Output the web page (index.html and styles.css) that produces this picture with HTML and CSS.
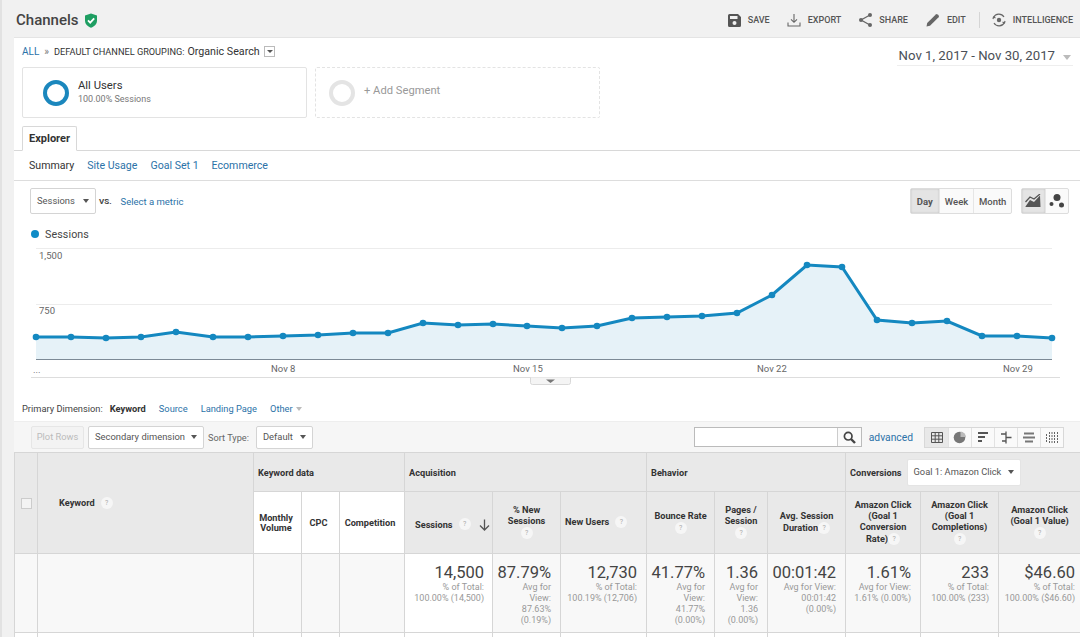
FILE: index.html
```html
<!DOCTYPE html>
<html lang="en">
<head>
<meta charset="utf-8">
<title>Channels</title>
<link rel="stylesheet" href="styles.css">
</head>
<body>
<header class="topbar">
  <div class="title"><h1>Channels</h1>
    <svg class="shield" width="14" height="15" viewBox="0 0 14 15"><path d="M7 0.5 13 2.6V7.5C13 11 10.5 13.5 7 14.7 3.5 13.5 1 11 1 7.5V2.6Z" fill="#1e9e62"/><path d="M4 7.4 6.2 9.6 10.2 5.4" fill="none" stroke="#fff" stroke-width="1.8"/></svg>
  </div>
  <nav class="actions">
    <a class="action save"><svg width="13" height="13" viewBox="0 0 13 13"><path d="M1.5 0H10L13 3V11.5A1.5 1.5 0 0 1 11.500 13H1.500A1.500 1.500 0 0 1 0 11.500V1.500A1.500 1.500 0 0 1 1.500 0Z" fill="#555"/><rect x="2" y="2" width="7.500" height="3" fill="#f1f1f1"/><circle cx="6.500" cy="9" r="2" fill="#f1f1f1"/></svg>SAVE</a>
    <a class="action export"><svg width="14" height="14" viewBox="0 0 14 14" fill="none" stroke="#666" stroke-width="1.100"><path d="M7 1V9M4 6.300 7 9.300 10 6.300M1 9.500V13H13V9.500"/></svg>EXPORT</a>
    <a class="action share"><svg width="13" height="14" viewBox="0 0 13 14"><path d="M11 2 2 7 11 12" fill="none" stroke="#666" stroke-width="1.300"/><circle cx="11" cy="2" r="2" fill="#666"/><circle cx="2" cy="7" r="2" fill="#666"/><circle cx="11" cy="12" r="2" fill="#666"/></svg>SHARE</a>
    <a class="action edit"><svg width="14" height="14" viewBox="0 0 14 14"><path d="M0.500 13.500 1.200 10 9.800 1.400A1.300 1.300 0 0 1 11.600 1.400L12.600 2.400A1.300 1.300 0 0 1 12.600 4.200L4 12.800Z" fill="#666"/></svg>EDIT</a>
    <span class="divider"></span>
    <a class="action intel"><svg width="14" height="14" viewBox="0 0 14 14" fill="none" stroke="#666" stroke-width="1.200"><path d="M1.500 4.500A6 6 0 0 1 12 4M12.500 9.500A6 6 0 0 1 2 10"/><path d="M1 6 1.500 4 3.500 5M13 8 12.500 10 10.500 9"/><circle cx="7" cy="7" r="2.200" fill="#666" stroke="none"/></svg>INTELLIGENCE</a>
  </nav>
</header>

<main class="content">
  <section class="top">
    <div class="top-left">
      <div class="crumbs"><a class="link all">ALL</a><span class="raquo">»</span><span class="group">DEFAULT CHANNEL GROUPING:</span><span class="crumb-value">Organic Search</span><span class="mini-select"></span></div>
      <div class="segments">
        <div class="segment">
          <span class="ring ring-on"></span>
          <div><div class="seg-name">All Users</div><div class="seg-sub">100.00% Sessions</div></div>
        </div>
        <div class="segment segment-add">
          <span class="ring ring-off"></span>
          <div class="seg-add-text">+ Add Segment</div>
        </div>
      </div>
    </div>
    <div class="date">Nov 1, 2017 - Nov 30, 2017<span class="caret caret-date"></span></div>
  </section>

  <div class="tabs"><span class="tab">Explorer</span></div>
  <nav class="subnav"><span>Summary</span><a class="link">Site Usage</a><a class="link">Goal Set 1</a><a class="link">Ecommerce</a></nav>

  <div class="metric-row">
    <span class="select metric-select">Sessions<span class="caret"></span></span>
    <b class="vs">VS.</b>
    <a class="link metric-link">Select a metric</a>
    <span class="spacer"></span>
    <div class="btn-group periods"><span class="active">Day</span><span>Week</span><span>Month</span></div>
    <div class="btn-group modes">
      <span class="active"><svg width="16" height="14" viewBox="0 0 16 14"><path d="M0.500 12.500 5 6 9 8 15 1.500 15.500 13H0.500Z" fill="#555"/><path d="M0.500 8 5 3 9 5 15 0" fill="none" stroke="#555" stroke-width="1.300"/></svg></span>
      <span><svg width="16" height="14" viewBox="0 0 16 14"><circle cx="8" cy="3.500" r="3.500" fill="#444"/><circle cx="2.500" cy="10" r="2" fill="#444"/><circle cx="12.500" cy="11" r="2.500" fill="#444"/></svg></span>
    </div>
  </div>

  <div class="legend"><span class="dot"></span>Sessions</div>

  <svg class="chart" width="1066" height="141" viewBox="14 244 1066 141">
    <line class="grid" x1="36" y1="248.500" x2="1052" y2="248.500"/>
    <line class="grid" x1="36" y1="304.500" x2="1052" y2="304.500"/>
    <polygon class="area" points="36,360 36,337 71,337 106,338 141,337 176,332 213,337 248,337 283,336 318,335 353,333 388,333 423,323 458,325 493,324 527,326 562,328 597,326 632,318 667,317 702,316 737,313 772,295 807,265 842,267 877,320 912,323 947,321 982,336 1017,336 1052,338 1052,360"/>
    <line class="axis" x1="36" y1="359.500" x2="1052" y2="359.500"/>
    <line class="axis-low" x1="31" y1="377.500" x2="1060" y2="377.500"/>
    <polyline class="line" points="36,337 71,337 106,338 141,337 176,332 213,337 248,337 283,336 318,335 353,333 388,333 423,323 458,325 493,324 527,326 562,328 597,326 632,318 667,317 702,316 737,313 772,295 807,265 842,267 877,320 912,323 947,321 982,336 1017,336 1052,338"/>
    <g class="points">
      <circle cx="36" cy="337" r="3.300"/><circle cx="71" cy="337" r="3.300"/><circle cx="106" cy="338" r="3.300"/><circle cx="141" cy="337" r="3.300"/><circle cx="176" cy="332" r="3.300"/><circle cx="213" cy="337" r="3.300"/><circle cx="248" cy="337" r="3.300"/><circle cx="283" cy="336" r="3.300"/><circle cx="318" cy="335" r="3.300"/><circle cx="353" cy="333" r="3.300"/><circle cx="388" cy="333" r="3.300"/><circle cx="423" cy="323" r="3.300"/><circle cx="458" cy="325" r="3.300"/><circle cx="493" cy="324" r="3.300"/><circle cx="527" cy="326" r="3.300"/><circle cx="562" cy="328" r="3.300"/><circle cx="597" cy="326" r="3.300"/><circle cx="632" cy="318" r="3.300"/><circle cx="667" cy="317" r="3.300"/><circle cx="702" cy="316" r="3.300"/><circle cx="737" cy="313" r="3.300"/><circle cx="772" cy="295" r="3.300"/><circle cx="807" cy="265" r="3.300"/><circle cx="842" cy="267" r="3.300"/><circle cx="877" cy="320" r="3.300"/><circle cx="912" cy="323" r="3.300"/><circle cx="947" cy="321" r="3.300"/><circle cx="982" cy="336" r="3.300"/><circle cx="1017" cy="336" r="3.300"/><circle cx="1052" cy="338" r="3.300"/>
    </g>
    <text class="tick" x="39" y="259">1,500</text>
    <text class="tick" x="39" y="314">750</text>
    <text class="tick" x="33" y="373">...</text>
    <text class="tick" x="271" y="372">Nov 8</text>
    <text class="tick" x="513" y="372">Nov 15</text>
    <text class="tick" x="757" y="372">Nov 22</text>
    <text class="tick" x="1003" y="372">Nov 29</text>
    <path class="handle" d="M530.500 377.500V382.500A2 2 0 0 0 532.500 384.500H568.500A2 2 0 0 0 570.500 382.500V377.500"/>
    <path d="M546 379.500H555L550.500 383Z" fill="#777"/>
  </svg>

  <div class="dimensions"><span class="dim-label">Primary Dimension:</span><b class="dim-active">Keyword</b><a class="link dim-link">Source</a><a class="link dim-link">Landing Page</a><a class="link dim-link">Other<span class="caret caret-other"></span></a></div>

  <div class="toolbar">
    <span class="select plot">Plot Rows</span>
    <span class="select secondary">Secondary dimension<span class="caret"></span></span>
    <span class="sort-label">Sort Type:</span>
    <span class="select sort">Default<span class="caret"></span></span>
    <span class="spacer"></span>
    <div class="search"><span class="search-input"></span><span class="search-btn"><svg width="13" height="13" viewBox="0 0 13 13" fill="none" stroke="#444"><circle cx="5.200" cy="5.200" r="3.800" stroke-width="1.700"/><path d="M8 8 12 12" stroke-width="2.400"/></svg></span></div>
    <a class="link advanced">advanced</a>
    <div class="views">
      <span class="active"><svg width="14" height="13" viewBox="0 0 14 13" fill="none" stroke="#555"><path d="M1.500 1.500H12.500V11.500H1.500ZM1.500 4.800H12.500M1.500 8.200H12.500M5.200 1.500V11.500M8.800 1.500V11.500"/></svg></span>
      <span><svg width="14" height="13" viewBox="0 0 14 13"><circle cx="6.500" cy="6.500" r="5.800" fill="#777"/><path d="M7.500 0.500A5.800 5.800 0 0 1 13 6H7.500Z" fill="#bbb"/></svg></span>
      <span><svg width="14" height="13" viewBox="0 0 14 13" fill="#555"><rect x="2" y="1" width="10" height="2"/><rect x="2" y="5" width="7" height="2"/><rect x="2" y="9" width="4" height="2"/></svg></span>
      <span><svg width="14" height="13" viewBox="0 0 14 13" fill="none" stroke="#555" stroke-width="1.300"><path d="M2 3H7M7 0.500V6.500H12.500M7 6.500V12.500M3 10H7"/></svg></span>
      <span><svg width="14" height="13" viewBox="0 0 14 13" fill="#777"><rect x="2" y="1.500" width="10" height="2"/><rect x="1" y="5.500" width="12" height="2"/><rect x="3" y="9.500" width="8" height="2"/></svg></span>
      <span><svg width="14" height="13" viewBox="0 0 14 13" fill="none" stroke="#666"><path d="M1.500 3V12M4.500 1V12M7 1V12M9.500 1V12M12.500 1V12" stroke-dasharray="2 1"/></svg></span>
    </div>
  </div>

  <table class="report">
    <colgroup>
      <col class="c-check"><col class="c-key"><col class="c-vol"><col class="c-cpc"><col class="c-comp"><col class="c-sess"><col class="c-new"><col class="c-users"><col class="c-bounce"><col class="c-pages"><col class="c-avg"><col class="c-rate"><col class="c-done"><col class="c-value">
    </colgroup>
    <thead>
      <tr class="row-group">
        <th rowspan="2" class="check-cell"><span class="checkbox"></span></th>
        <th rowspan="2" class="key-head"><span class="key-inner">Keyword<i class="q">?</i></span></th>
        <th colspan="3" class="left">Keyword data</th>
        <th colspan="3" class="left">Acquisition</th>
        <th colspan="3" class="left">Behavior</th>
        <th colspan="3" class="left conv"><span class="conv-wrap">Conversions<span class="select goal">Goal 1: Amazon Click<span class="caret"></span></span></span></th>
      </tr>
      <tr class="row-head">
        <th class="white tight">Monthly<br>Volume</th>
        <th class="white">CPC</th>
        <th class="white">Competition</th>
        <th class="sess-head"><span class="sess-inner">Sessions<i class="q">?</i><svg class="arrow" width="11" height="12" viewBox="0 0 11 12" fill="none" stroke="#555" stroke-width="1.300"><path d="M5.500 0.500V11M1 6.500 5.500 11 10 6.500"/></svg></span></th>
        <th>% New<br>Sessions<br><i class="q">?</i></th>
        <th class="users-head">New Users<i class="q">?</i></th>
        <th>Bounce Rate<br><i class="q">?</i></th>
        <th>Pages /<br>Session<br><i class="q">?</i></th>
        <th>Avg. Session<br>Duration<i class="q">?</i></th>
        <th>Amazon Click<br>(Goal 1<br>Conversion<br>Rate)<i class="q">?</i></th>
        <th>Amazon Click<br>(Goal 1<br>Completions)<br><i class="q">?</i></th>
        <th>Amazon Click<br>(Goal 1 Value)<br><i class="q">?</i></th>
      </tr>
    </thead>
    <tbody>
      <tr class="totals">
        <td></td><td></td><td></td><td></td><td></td>
        <td class="sorted"><strong>14,500</strong><small>% of Total:<br>100.00% (14,500)</small></td>
        <td><strong>87.79%</strong><small>Avg for<br>View:<br>87.63%<br>(0.19%)</small></td>
        <td><strong>12,730</strong><small>% of Total:<br>100.19% (12,706)</small></td>
        <td><strong>41.77%</strong><small>Avg for<br>View:<br>41.77%<br>(0.00%)</small></td>
        <td><strong>1.36</strong><small>Avg for<br>View:<br>1.36<br>(0.00%)</small></td>
        <td><strong>00:01:42</strong><small>Avg for View:<br>00:01:42<br>(0.00%)</small></td>
        <td><strong>1.61%</strong><small>Avg for View:<br>1.61% (0.00%)</small></td>
        <td><strong>233</strong><small>% of Total:<br>100.00% (233)</small></td>
        <td class="last"><strong>$46.60</strong><small>% of Total:<br>100.00% ($46.60)</small></td>
      </tr>
      <tr class="next">
        <td></td><td></td><td></td><td></td><td></td><td class="sorted-next"></td><td></td><td></td><td></td><td></td><td></td><td></td><td></td><td></td>
      </tr>
    </tbody>
  </table>
</main>
</body>
</html>
```
FILE: styles.css
```css
* { box-sizing: border-box; }
html, body { margin: 0; height: 100%; overflow: hidden; }
body {
  width: 1080px; height: 637px;
  background: #f1f1f1;
  border-left: 2px solid #e2e2e2;
  font-family: Roboto, "Liberation Sans", sans-serif;
  color: #333;
  font-size: 11px;
}
svg { display: block; }
.link { color: #2b72a8; }
.spacer { flex: 1; }

.topbar { height: 37px; display: flex; align-items: center; padding: 3px 7px 0 14px; }
.title { display: flex; align-items: center; gap: 5px; }
.title h1 { margin: 0; font-size: 15px; font-weight: 500; color: #444; }
.actions { margin-left: auto; display: flex; align-items: center; font-size: 9px; font-weight: 500; color: #555; }
.action { display: flex; align-items: center; gap: 7px; }
.save { margin-right: 17px; }
.export { margin-right: 18px; }
.share { margin-right: 18px; }
.divider { width: 1px; height: 16px; background: #d5d5d5; margin: 0 12px 0 13px; }

.content { margin-left: 12px; width: 1066px; height: 600px; background: #fff; border-top: 1px solid #e4e4e4; }

.top { display: flex; padding: 5px 7px 0 8px; height: 88px; }
.top-left { display: flex; flex-direction: column; }
.crumbs { display: flex; align-items: center; height: 16px; font-size: 11px; color: #333; }
.all { font-size: 10px; }
.raquo { margin: 0 5px; color: #777; font-size: 10px; }
.group { font-size: 9.200px; margin-right: 3px; }
.crumb-value { font-size: 10.700px; }
.mini-select { position: relative; width: 11px; height: 11px; border: 1px solid #bbb; margin-left: 4px; }
.mini-select::after { content: ""; position: absolute; left: 2px; top: 3px; border: 3px solid transparent; border-top: 3px solid #555; }
.segments { display: flex; gap: 8px; margin-top: 8px; }
.segment { width: 285px; height: 51px; border: 1px solid #e3e3e3; border-radius: 2px; display: flex; align-items: center; padding-left: 20px; gap: 9px; }
.segment-add { border-style: dashed; padding-left: 13px; }
.ring { width: 26px; height: 26px; border-radius: 50%; border: 4px solid #1b87bd; }
.ring-off { border-color: #e4e4e4; }
.seg-name { font-size: 11.300px; color: #333; line-height: 14px; }
.seg-sub { font-size: 9px; color: #777; line-height: 13px; }
.seg-add-text { font-size: 11.200px; color: #999; margin-bottom: 4px; }
.date { margin-left: auto; align-self: flex-start; margin-top: 4px; width: 176px; height: 19px; font-size: 13.200px; color: #4a4f57; white-space: nowrap; border-bottom: 1px solid #eee; line-height: 18px; position: relative; text-align: right; padding-right: 18px; }
.caret { display: inline-block; border: 3.500px solid transparent; border-top: 4px solid #555; border-bottom: 0; margin-left: 8px; vertical-align: middle; }
.caret-date { position: absolute; right: 2px; top: 8px; border-width: 5px 4.500px 0; border-top-color: #bbb; margin: 0; }

.tabs { height: 25px; padding-left: 8px; border-bottom: 1px solid #d8d8d8; }
.tab { display: block; width: 55px; height: 25px; border: 1px solid #d8d8d8; border-bottom: 1px solid #fff; border-radius: 2px 2px 0 0; background: #fff; text-align: center; font-size: 11px; font-weight: 700; line-height: 24px; color: #333; }
.subnav { height: 30px; display: flex; align-items: center; gap: 13px; padding-left: 15px; font-size: 10.600px; border-bottom: 1px solid #ddd; }

.metric-row { display: flex; align-items: center; height: 26px; margin-top: 7px; padding-left: 16px; padding-right: 11px; }
.select { display: flex; align-items: center; justify-content: space-between; height: 100%; border: 1px solid #d4d4d4; border-radius: 2px; background: #fff; color: #555; font-size: 9.400px; line-height: 10px; padding: 0 6px 1px 6px; white-space: nowrap; }
.select .caret { margin-left: 6px; }
.metric-select { width: 66px; }
.vs { font-size: 8px; margin-left: 3px; color: #444; }
.metric-link { font-size: 9.500px; margin-left: 9px; }
.btn-group { display: flex; height: 26px; border: 1px solid #ddd; border-radius: 2px; background: #fafafa; }
.btn-group span { display: flex; align-items: center; justify-content: center; border-left: 1px solid #e6e6e6; font-size: 9.500px; font-weight: 500; color: #555; }
.btn-group span:first-child { border-left: 0; }
.btn-group .active { background: #e4e4e4; box-shadow: inset 0 0 2px #bbb; font-weight: 700; }
.periods { width: 102px; }
.periods span:nth-child(1) { width: 28px; }
.periods span:nth-child(2) { width: 35px; }
.periods span:nth-child(3) { width: 38px; }
.modes { width: 48px; margin-left: 9px; }
.modes span { width: 24px; }

.legend { display: flex; align-items: center; height: 16px; margin-top: 12px; margin-left: 17px; font-size: 10.700px; color: #444; letter-spacing: 0.100px; }
.dot { width: 8px; height: 8px; border-radius: 50%; background: #0f8bc6; margin-right: 6px; }

.chart { margin-top: 2px; }
.grid { stroke: #ececec; }
.axis { stroke: #7c8a96; }
.axis-low { stroke: #ddd; }
.area { fill: #e6f2f8; }
.line { fill: none; stroke: #1488c0; stroke-width: 3; }
.points circle { fill: #1488c0; }
.tick { font-family: Roboto, "Liberation Sans", sans-serif; font-size: 9.500px; fill: #666; }
.handle { fill: #f4f4f4; stroke: #d8d8d8; }

.dimensions { display: flex; align-items: center; height: 16px; margin-top: 15px; padding-left: 8px; font-size: 9.300px; color: #444; }
.dim-active { margin-left: 7px; font-weight: 700; color: #333; }
.dim-link { margin-left: 13px; }
.caret-other { border-top-color: #bbb; margin-left: 3px; }

.toolbar { display: flex; align-items: center; height: 31px; margin-top: 5px; padding: 0 16px 0 17px; background: #f6f6f6; border-top: 1px solid #eee; }
.toolbar > .select { height: 23px; }
.plot { width: 53px; justify-content: center; color: #bbb; background: #f3f3f3; border-color: #e6e6e6; padding: 0; font-size: 9.300px; }
.secondary { width: 116px; margin-left: 4px; }
.sort-label { margin-left: 4px; font-size: 9.200px; color: #666; }
.sort { width: 57px; margin-left: 7px; }
.search { display: flex; height: 20px; border: 1px solid #bbb; background: #fff; }
.search-input { width: 142px; }
.search-btn { width: 24px; display: flex; align-items: center; justify-content: center; border-left: 1px solid #ccc; background: #fafafa; }
.advanced { margin-left: 7px; font-size: 10.300px; }
.views { display: flex; height: 21px; margin-left: 11px; border: 1px solid #d8d8d8; background: #fafafa; }
.views span { width: 23px; display: flex; align-items: center; justify-content: center; border-left: 1px solid #e2e2e2; }
.views span:first-child { border-left: 0; }
.views .active { background: #e8e8e8; }

.report { table-layout: fixed; width: 1066px; border-collapse: collapse; }
.c-check { width: 23px; } .c-key { width: 216px; } .c-vol { width: 48px; } .c-cpc { width: 38px; } .c-comp { width: 65px; }
.c-sess { width: 88px; } .c-new { width: 68px; } .c-users { width: 86px; } .c-bounce { width: 68px; } .c-pages { width: 53px; }
.c-avg { width: 78px; } .c-rate { width: 75px; } .c-done { width: 78px; } .c-value { width: 82px; }
.report th, .report td { border: 1px solid #d6d6d6; }
.report th { background: #e9e9e9; font-size: 9.200px; font-weight: 700; color: #333; line-height: 11px; padding: 0 4px; }
.row-group { height: 39px; }
.row-group .left { text-align: left; padding-left: 4px; }
.row-head { height: 62px; }
.report .white { background: #fff; padding: 0 6px 0 2px; }
.report .tight { line-height: 10px; padding: 0 3px 0 0; }
.report .check-cell { padding: 0; }
.report .users-head { padding: 0 0 0 4px; text-align: left; }
.checkbox { display: block; width: 11px; height: 11px; margin: 0 auto; border: 1px solid #ccc; background: #f3f3f3; }
.key-inner { display: block; padding-left: 17px; text-align: left; }
.q { display: inline-block; width: 12px; height: 12px; margin: 1px 0 2px 6px; vertical-align: middle; border-radius: 50%; background: #f6f6f6; color: #aaa; font-size: 7px; font-style: normal; font-weight: 400; line-height: 12px; text-align: center; }
.report br + .q { margin-left: 0; }
.sess-inner { display: flex; align-items: center; padding: 4px 0 0 10px; }
.arrow { margin-left: auto; margin-right: 2px; }
.sess-head { padding: 0 !important; }
.conv-wrap { display: flex; align-items: center; gap: 5px; }
.goal { height: 27px; width: 114px; font-weight: 400; font-size: 9.300px; border-color: #e4e4e4; }

.totals { height: 79px; }
.totals td { background: #f8f8f8; vertical-align: top; text-align: right; padding: 9px 9px 0 2px; }
.totals .sorted { background: #fff; padding-right: 8px; }
.totals .last { padding-right: 5px; }
.totals strong { display: block; font-size: 16.500px; font-weight: 400; color: #444; line-height: 19px; }
.totals small { display: block; font-size: 9px; color: #999; line-height: 11px; }
.next { height: 30px; }
.next td { background: #fff; }
```
